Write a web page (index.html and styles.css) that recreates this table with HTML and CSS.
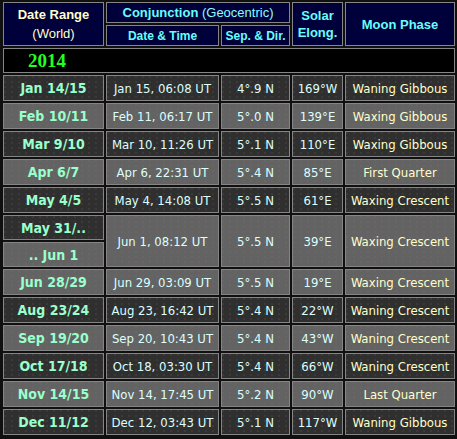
FILE: index.html
```
<!DOCTYPE html>
<html>
<head>
<meta charset="utf-8">
<link rel="stylesheet" href="styles.css">
</head>
<body>
<table class="conj">
  <colgroup>
    <col class="c1"><col class="c2"><col class="c3"><col class="c4"><col class="c5">
  </colgroup>
  <tr class="h1">
    <th rowspan="2" class="hd-range"><span class="hb">Date Range</span><br><span class="hn">(World)</span></th>
    <th colspan="2" class="hd-conj">Conjunction <span class="geo">(Geocentric)</span></th>
    <th rowspan="2" class="hd-elong">Solar<br>Elong.</th>
    <th rowspan="2" class="hd-phase">Moon Phase</th>
  </tr>
  <tr class="h2">
    <th class="hd-sub">Date &amp; Time</th>
    <th class="hd-sub">Sep. &amp; Dir.</th>
  </tr>
  <tr class="year"><td colspan="5">2014</td></tr>
  <tr class="d"><td class="rng">Jan 14/15</td><td>Jan 15, 06:08 UT</td><td>4°.9 N</td><td>169°W</td><td class="ph">Waning Gibbous</td></tr>
  <tr class="l"><td class="rng">Feb 10/11</td><td>Feb 11, 06:17 UT</td><td>5°.0 N</td><td>139°E</td><td class="ph">Waxing Gibbous</td></tr>
  <tr class="d"><td class="rng">Mar 9/10</td><td>Mar 10, 11:26 UT</td><td>5°.1 N</td><td>110°E</td><td class="ph">Waxing Gibbous</td></tr>
  <tr class="l"><td class="rng">Apr 6/7</td><td>Apr 6, 22:31 UT</td><td>5°.4 N</td><td>85°E</td><td class="ph">First Quarter</td></tr>
  <tr class="d"><td class="rng">May 4/5</td><td>May 4, 14:08 UT</td><td>5°.5 N</td><td>61°E</td><td class="ph">Waxing Crescent</td></tr>
  <tr class="d short"><td class="rng">May 31/..</td><td rowspan="2" class="lt">Jun 1, 08:12 UT</td><td rowspan="2" class="lt">5°.5 N</td><td rowspan="2" class="lt">39°E</td><td rowspan="2" class="ph lt">Waxing Crescent</td></tr>
  <tr class="l short"><td class="rng">.. Jun 1</td></tr>
  <tr class="l"><td class="rng">Jun 28/29</td><td>Jun 29, 03:09 UT</td><td>5°.5 N</td><td>19°E</td><td class="ph">Waxing Crescent</td></tr>
  <tr class="d"><td class="rng">Aug 23/24</td><td>Aug 23, 16:42 UT</td><td>5°.4 N</td><td>22°W</td><td class="ph">Waning Crescent</td></tr>
  <tr class="l"><td class="rng">Sep 19/20</td><td>Sep 20, 10:43 UT</td><td>5°.4 N</td><td>43°W</td><td class="ph">Waning Crescent</td></tr>
  <tr class="d"><td class="rng">Oct 17/18</td><td>Oct 18, 03:30 UT</td><td>5°.4 N</td><td>66°W</td><td class="ph">Waning Crescent</td></tr>
  <tr class="l"><td class="rng">Nov 14/15</td><td>Nov 14, 17:45 UT</td><td>5°.2 N</td><td>90°W</td><td class="ph">Last Quarter</td></tr>
  <tr class="d"><td class="rng">Dec 11/12</td><td>Dec 12, 03:43 UT</td><td>5°.1 N</td><td>117°W</td><td class="ph">Waning Gibbous</td></tr>
</table>
</body>
</html>
```
FILE: styles.css
```
html, body {
  margin: 0;
  padding: 0;
  background: #101010;
}
body {
  font-family: "DejaVu Sans Condensed", "DejaVu Sans", sans-serif;
  font-size: 13px;
}
.conj {
  margin-left: 1px;
  border-collapse: separate;
  border-spacing: 2px;
  table-layout: fixed;
  width: 456px;
}
.c1 { width: 101px; }
.c2 { width: 113px; }
.c3 { width: 69px; }
.c4 { width: 51px; }
.c5 { width: 110px; }
.conj th, .conj td {
  border: 1px solid #858585;
  padding: 0;
  text-align: center;
  vertical-align: middle;
  white-space: nowrap;
  overflow: hidden;
}
.conj th {
  background: #00003a;
  color: #66ffff;
  font-family: "Liberation Sans", Arial, sans-serif;
  font-weight: bold;
  font-size: 13px;
}
.h1 th, .h2 th { height: 19px; }
.hd-range { line-height: 19px; }
.hd-range .hb { color: #ffffcc; }
.hd-range .hn { color: #ffffcc; font-weight: normal; font-size: 13px; }
.hd-conj { font-size: 14px; }
.hd-conj .geo { font-weight: normal; font-size: 13px; color: #88ffff; }
.hd-elong { line-height: 17px; }
.hd-phase { color: #ffffdd; }
.conj th.hd-sub { font-size: 12px; }
.year td {
  background: #000;
  height: 23px;
  text-align: left;
  padding-left: 24px;
  color: #22ff22;
  font-family: "Liberation Serif", serif;
  font-weight: bold;
  font-size: 19px;
}
.d td, .l td {
  height: 24px;
  color: #ddffff;
}
.short td { height: 23px; }
.d td { background-color: #2f2f2f; }
.l td, .d td.lt { background-color: #636363; }
.d td, .l td {
  background-image: radial-gradient(circle at 1px 1px, rgba(160,120,120,0.18) 0.6px, transparent 1px);
  background-size: 7px 5px;
}
.conj td.rng {
  color: #99ffcc;
  font-weight: bold;
  font-size: 14px;
}
.conj td.ph { color: #ffffcc; }
```
